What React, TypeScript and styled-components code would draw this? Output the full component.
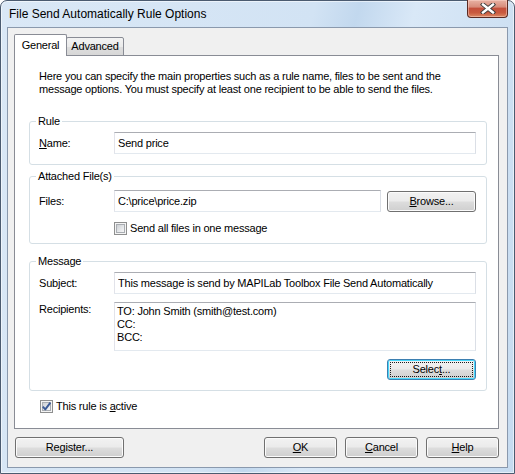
import React from "react";
import styled, { createGlobalStyle, css } from "styled-components";

const GlobalStyle = createGlobalStyle`
  html, body { margin: 0; padding: 0; background: #ffffff; }
  body {
    font-family: "Liberation Sans", Arial, sans-serif;
    font-size: 11px;
    letter-spacing: -0.2px;
    color: #000;
  }
  * { box-sizing: border-box; }
  input, textarea, button { letter-spacing: inherit; }
`;

const Window = styled.div`
  width: 515px;
  height: 474px;
  border: 1px solid #4b5b70;
  border-radius: 7px 7px 0 0;
  background: linear-gradient(
    104deg,
    #dae8f6 0%,
    #d2e3f4 50%,
    #c2d8ee 57%,
    #d9e8f7 66%,
    #cfe1f3 80%,
    #c6dbf0 100%
  );
  box-shadow: inset 0 0 0 1px rgba(255, 255, 255, 0.55);
  padding: 0 6px 5px 6px;
  display: flex;
  flex-direction: column;
`;

const TitleBar = styled.div`
  height: 26px;
  display: flex;
  align-items: flex-start;
  flex-shrink: 0;
`;

const TitleText = styled.div`
  padding: 5px 0 0 2px;
  font-size: 12px;
  line-height: 16px;
  letter-spacing: 0;
  color: #000;
  flex: 1;
`;

const CloseButton = styled.div`
  width: 41px;
  height: 18px;
  margin-top: -1px;
  border: 1px solid #5a2a22;
  border-top: none;
  border-radius: 0 0 4px 4px;
  background: linear-gradient(
    #e8b2a4 0%,
    #d88d7c 40%,
    #c4503c 50%,
    #c95a3f 75%,
    #dc8a64 100%
  );
  box-shadow: inset 0 0 0 1px rgba(255, 220, 210, 0.45);
  display: flex;
  align-items: center;
  justify-content: center;
`;

const Client = styled.div`
  flex: 1;
  border: 1px solid #8a99ad;
  background: #f0f0f0;
  display: flex;
  flex-direction: column;
  padding: 6px 8px 0 6px;
`;

const TabStrip = styled.div`
  height: 22px;
  margin-bottom: -1px;
  display: flex;
  align-items: flex-end;
  position: relative;
  z-index: 1;
`;

const Tab = styled.div<{ $active?: boolean; $w: number }>`
  width: ${(p) => p.$w}px;
  border: 1px solid #898c95;
  border-radius: 2px 2px 0 0;
  display: flex;
  justify-content: center;
  line-height: 13px;
  ${(p) =>
    p.$active
      ? css`
          height: 22px;
          border-bottom: none;
          background: #ffffff;
          padding-top: 4px;
          position: relative;
          z-index: 2;
        `
      : css`
          height: 19px;
          margin-left: -1px;
          background: linear-gradient(#f3f3f3 0%, #ebebeb 50%, #dedede 51%, #d7d7d7 100%);
          padding-top: 2px;
        `}
`;

const Panel = styled.div`
  height: 374px;
  border: 1px solid #898c95;
  background: #ffffff;
  padding: 0 11px 0 14px;
  display: flex;
  flex-direction: column;
`;

const Intro = styled.p`
  margin: 14px 0 0 10px;
  line-height: 13px;
`;

const Group = styled.div<{ $top: number }>`
  position: relative;
  width: 458px;
  margin-top: ${(p) => p.$top}px;
  border: 1px solid #d5dfe5;
  border-radius: 3px;
  display: flex;
  flex-direction: column;
`;

const GroupLabel = styled.span`
  position: absolute;
  top: -7px;
  left: 6px;
  padding: 0 2px;
  background: #ffffff;
  line-height: 13px;
`;

const GroupBody = styled.div<{ $pt: number; $pb: number; $gap: number }>`
  padding: ${(p) => p.$pt}px 10px ${(p) => p.$pb}px 9px;
  display: flex;
  flex-direction: column;
  gap: ${(p) => p.$gap}px;
`;

const FieldRow = styled.div<{ $top?: boolean }>`
  display: flex;
  align-items: ${(p) => (p.$top ? "flex-start" : "center")};
`;

const FieldLabel = styled.label<{ $top?: boolean }>`
  width: 75px;
  flex-shrink: 0;
  line-height: 13px;
  ${(p) => p.$top && "padding-top: 1px;"}
`;

const TextBox = styled.input<{ $w: number }>`
  width: ${(p) => p.$w}px;
  height: 22px;
  border: 1px solid;
  border-color: #abadb3 #dbdfe6 #e3e9ef #e2e3ea;
  background: #ffffff;
  padding: 0 3px;
  margin: 0;
  font: inherit;
  color: #000;
  outline: none;
`;

const TextArea = styled.textarea`
  width: 362px;
  height: 49px;
  border: 1px solid;
  border-color: #abadb3 #dbdfe6 #e3e9ef #e2e3ea;
  background: #ffffff;
  padding: 2px 2px;
  margin: 0;
  font: inherit;
  line-height: 13px;
  color: #000;
  resize: none;
  overflow: hidden;
  outline: none;
`;

const Button = styled.button<{ $w: number; $focused?: boolean }>`
  position: relative;
  width: ${(p) => p.$w}px;
  height: 21px;
  margin: 0;
  padding: 0;
  border: 1px solid #707070;
  border-radius: 3px;
  background: linear-gradient(#f2f2f2 0%, #ebebeb 48%, #dddddd 52%, #cfcfcf 100%);
  box-shadow: inset 0 0 0 1px #fbfbfb;
  font: inherit;
  color: #000;
  line-height: 13px;
  ${(p) =>
    p.$focused &&
    css`
      border-color: #3c7fb1;
      box-shadow: inset 0 0 0 1px #48d8fb;
      &::after {
        content: "";
        position: absolute;
        inset: 2px;
        border: 1px dotted #1a1a1a;
        border-radius: 1px;
      }
    `}
`;

const CheckRow = styled.div<{ $indent: number; $top?: number }>`
  display: flex;
  align-items: center;
  gap: 3px;
  margin-left: ${(p) => p.$indent}px;
  margin-top: ${(p) => p.$top ?? 0}px;
  line-height: 13px;
`;

const CheckBox = styled.span`
  width: 13px;
  height: 13px;
  flex-shrink: 0;
  border: 1px solid #8e8f8f;
  background: #f4f4f4;
  display: flex;
  align-items: center;
  justify-content: center;
  position: relative;
`;

const CheckInner = styled.span`
  width: 9px;
  height: 9px;
  border: 1px solid #a9adb2;
  background: linear-gradient(135deg, #cdd0d4 0%, #e6e8ea 60%, #f6f6f6 100%);
`;

const CheckMark = styled.svg`
  position: absolute;
  left: 0;
  top: 0;
`;

const RightRow = styled.div`
  display: flex;
  justify-content: flex-end;
`;

const ButtonBar = styled.div`
  margin-top: 8px;
  padding: 0 0 0 1px;
  display: flex;
  gap: 8px;
`;

const Spacer = styled.div`
  flex: 1;
`;

function Check({ checked }: { checked?: boolean }) {
  return (
    <CheckBox>
      <CheckInner />
      {checked && (
        <CheckMark width="11" height="11" viewBox="0 0 11 11">
          <path
            d="M1.8 5.6 L4.3 8.4 L9.4 1.6"
            fill="none"
            stroke="#3b5a96"
            strokeWidth="1.9"
            strokeLinejoin="round"
          />
        </CheckMark>
      )}
    </CheckBox>
  );
}

function CloseGlyph() {
  return (
    <svg width="16" height="11" viewBox="0 0 16 11">
      <path d="M3 1.5 L13 9.5 M13 1.5 L3 9.5" stroke="#3a3a3a" strokeWidth="4.2" strokeLinecap="square" />
      <path d="M3 1.5 L13 9.5 M13 1.5 L3 9.5" stroke="#ffffff" strokeWidth="2.4" strokeLinecap="square" />
    </svg>
  );
}

export default function App() {
  return (
    <>
      <GlobalStyle />
      <Window>
        <TitleBar>
          <TitleText>File Send Automatically Rule Options</TitleText>
          <CloseButton>
            <CloseGlyph />
          </CloseButton>
        </TitleBar>
        <Client>
          <TabStrip>
            <Tab $active $w={53}>General</Tab>
            <Tab $w={58}>Advanced</Tab>
          </TabStrip>
          <Panel>
            <Intro>
              Here you can specify the main properties such as a rule name, files to be sent and the
              <br />
              message options. You must specify at least one recipient to be able to send the files.
            </Intro>

            <Group $top={25}>
              <GroupLabel>Rule</GroupLabel>
              <GroupBody $pt={10} $pb={10} $gap={0}>
                <FieldRow>
                  <FieldLabel>
                    <u>N</u>ame:
                  </FieldLabel>
                  <TextBox $w={362} readOnly value="Send price" />
                </FieldRow>
              </GroupBody>
            </Group>

            <Group $top={11}>
              <GroupLabel>Attached File(s)</GroupLabel>
              <GroupBody $pt={13} $pb={8} $gap={10}>
                <FieldRow>
                  <FieldLabel>Files:</FieldLabel>
                  <TextBox $w={267} readOnly value="C:\price\price.zip" />
                  <Spacer />
                  <Button $w={89}>
                    <u>B</u>rowse...
                  </Button>
                </FieldRow>
                <CheckRow $indent={75}>
                  <Check />
                  <span>Send all files in one message</span>
                </CheckRow>
              </GroupBody>
            </Group>

            <Group $top={17}>
              <GroupLabel>Message</GroupLabel>
              <GroupBody $pt={10} $pb={10} $gap={8}>
                <FieldRow>
                  <FieldLabel>Subject:</FieldLabel>
                  <TextBox
                    $w={362}
                    readOnly
                    value="This message is send by MAPILab Toolbox File Send Automatically"
                  />
                </FieldRow>
                <FieldRow $top>
                  <FieldLabel $top>Recipients:</FieldLabel>
                  <TextArea
                    readOnly
                    value={"TO: John Smith (smith@test.com)\nCC:\nBCC:"}
                  />
                </FieldRow>
                <RightRow>
                  <Button $w={89} $focused>
                    Selec<u>t</u>...
                  </Button>
                </RightRow>
              </GroupBody>
            </Group>

            <CheckRow $indent={11} $top={9}>
              <Check checked />
              <span>
                This rule is <u>a</u>ctive
              </span>
            </CheckRow>
          </Panel>
          <ButtonBar>
            <Button $w={109}>Register...</Button>
            <Spacer />
            <Button $w={73}>
              <u>O</u>K
            </Button>
            <Button $w={73}>
              <u>C</u>ancel
            </Button>
            <Button $w={73}>
              <u>H</u>elp
            </Button>
          </ButtonBar>
        </Client>
      </Window>
    </>
  );
}
